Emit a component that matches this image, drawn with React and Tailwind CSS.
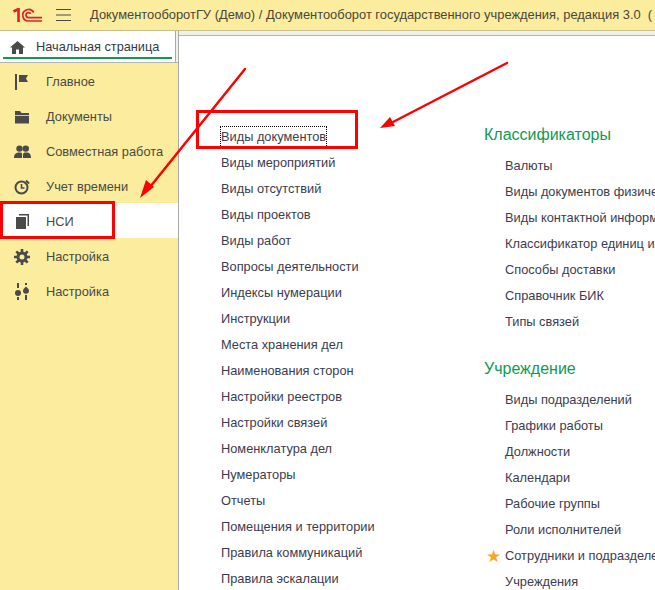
const font = { fontFamily: '"Liberation Sans", Arial, sans-serif' };

const leftLinks = [
  "Виды документов",
  "Виды мероприятий",
  "Виды отсутствий",
  "Виды проектов",
  "Виды работ",
  "Вопросы деятельности",
  "Индексы нумерации",
  "Инструкции",
  "Места хранения дел",
  "Наименования сторон",
  "Настройки реестров",
  "Настройки связей",
  "Номенклатура дел",
  "Нумераторы",
  "Отчеты",
  "Помещения и территории",
  "Правила коммуникаций",
  "Правила эскалации",
];

const classifiers = [
  "Валюты",
  "Виды документов физических лиц",
  "Виды контактной информации",
  "Классификатор единиц измерения",
  "Способы доставки",
  "Справочник БИК",
  "Типы связей",
];

const institution = [
  "Виды подразделений",
  "Графики работы",
  "Должности",
  "Календари",
  "Рабочие группы",
  "Роли исполнителей",
  "Сотрудники и подразделения",
  "Учреждения",
];

const FlagIcon = () => (
  <svg width="16" height="16" viewBox="0 0 16 16" fill="#4a4a4a">
    <rect x="1" y="0" width="2" height="16" />
    <path d="M5 1h9l-2 3.500 2 3.500H5z" />
  </svg>
);

const FolderIcon = () => (
  <svg width="16" height="14" viewBox="0 0 16 14" fill="#4a4a4a">
    <path d="M1 1h5l1.500 2H15v2H1z" />
    <rect x="1" y="5.800" width="14" height="7.700" />
  </svg>
);

const PeopleIcon = () => (
  <svg width="17" height="14" viewBox="0 0 17 14" fill="#4a4a4a">
    <circle cx="5.500" cy="3.600" r="3.200" />
    <circle cx="11.800" cy="3.600" r="3.200" />
    <path d="M0 13c0-4 2-5.500 5.500-5.500S8 9 8 13z" />
    <path d="M9 13c0-4-.5-5.500 3-5.500S17 9 17 13z" />
  </svg>
);

const TimerIcon = () => (
  <svg width="17" height="17" viewBox="0 0 17 17" fill="none" stroke="#4a4a4a" strokeWidth="2">
    <circle cx="7.500" cy="9.500" r="6" />
    <path d="M7.500 6v4h3" strokeWidth="1.600" />
    <path d="M12 2.500l3 3" />
  </svg>
);

const PagesIcon = () => (
  <svg width="15" height="15" viewBox="0 0 15 15" fill="#4a4a4a">
    <rect x="1" y="3" width="10" height="12" />
    <path d="M4 0h10v12h-1.500V1.500H4z" />
  </svg>
);

const GearIcon = () => (
  <svg width="16" height="16" viewBox="0 0 16 16" fill="none" stroke="#4a4a4a">
    <circle cx="8" cy="8" r="4" strokeWidth="3" />
    <path d="M8 0v3M8 13v3M0 8h3M13 8h3M2.300 2.300l2.200 2.200M11.500 11.500l2.200 2.200M13.700 2.300l-2.200 2.200M4.500 11.500l-2.200 2.200" strokeWidth="2.600" />
  </svg>
);

const SlidersIcon = () => (
  <svg width="14" height="17" viewBox="0 0 14 17" fill="#4a4a4a">
    <rect x="2" y="0" width="2" height="5" />
    <circle cx="3" cy="10" r="3" />
    <rect x="2" y="14" width="2" height="3" />
    <rect x="10" y="0" width="2" height="2" />
    <path d="M11 3.500c1.800 2 3 2.800 3 4.200a3 3 0 0 1-6 0c0-1.400 1.200-2.200 3-4.200z" />
    <rect x="10" y="12" width="2" height="5" />
  </svg>
);

const Logo = () => (
  <svg width="30" height="14" viewBox="0 0 30 14" fill="none" stroke="#d9232e">
    <path d="M0.500 3.500L5.500 1v13" strokeWidth="2.600" />
    <path d="M29 13H15.500a5.800 5.800 0 1 1 5.200-8.500" strokeWidth="1.700" />
    <path d="M29 9.600H15.500a2.500 2.500 0 1 1 2.200-3.700" strokeWidth="1.700" />
  </svg>
);

const HomeIcon = () => (
  <svg width="15" height="13" viewBox="0 0 15 13" fill="#4a4a4a">
    <path d="M7.500 0L15 6.500h-2V13H9V8.500H6V13H2V6.500H0z" />
  </svg>
);

const MenuIcon = () => (
  <svg width="15" height="12" viewBox="0 0 15 12" stroke="#4a4a4a" strokeWidth="1">
    <path d="M0 .5h15M0 6h15M0 11.500h15" />
  </svg>
);

const navItems = [
  { label: "Главное", icon: <FlagIcon /> },
  { label: "Документы", icon: <FolderIcon /> },
  { label: "Совместная работа", icon: <PeopleIcon /> },
  { label: "Учет времени", icon: <TimerIcon /> },
  { label: "НСИ", icon: <PagesIcon />, active: true },
  { label: "Настройка", icon: <GearIcon /> },
  { label: "Настройка", icon: <SlidersIcon /> },
];

const LinkRow = ({ text, focused, starred }) => (
  <div className="relative h-[26px] flex items-center whitespace-nowrap text-[12.8px] text-[#3c3c50]">
    {starred && <span className="absolute left-[-19px] top-[1px] text-[17px] text-[#f5a623]">★</span>}
    <span className={focused ? "inline-block outline-1 outline-dotted outline-black" : ""}>{text}</span>
  </div>
);

const Annotations = () => (
  <svg className="absolute left-0 top-0 pointer-events-none" width="655" height="590" fill="none">
    <rect x="197.500" y="111.500" width="159" height="36" stroke="#ff0000" strokeWidth="3" />
    <rect x="1.500" y="202.500" width="112" height="35" stroke="#ff0000" strokeWidth="3" />
    <path d="M245 69L150 187" stroke="#ff0000" strokeWidth="2.500" strokeLinecap="round" />
    <path d="M140 198l6-18 8 7z" fill="#ff0000" />
    <path d="M507 63L393 122" stroke="#ff0000" strokeWidth="2.500" strokeLinecap="round" />
    <path d="M380 128l10-11 5 9z" fill="#ff0000" />
  </svg>
);

export default function App() {
  return (
    <div className="relative w-[655px] h-[590px] overflow-hidden bg-[#fbec9e] flex flex-col" style={font}>
      <header className="h-[31px] shrink-0 flex items-center border-b border-[#c9bf8a]">
        <div className="ml-[13px]"><Logo /></div>
        <div className="ml-[13px]"><MenuIcon /></div>
        <span className="ml-[19px] whitespace-pre text-[12.9px] text-[#4b4638]">
          ДокументооборотГУ (Демо) / Документооборот государственного учреждения, редакция 3.0  (
        </span>
      </header>
      <div className="flex flex-1 min-h-0">
        <aside className="w-[179px] shrink-0 flex flex-col border-r border-[#a9a9a9]">
          <div className="h-[32px] shrink-0 bg-[#f0f0e8] border-b border-[#b5b5b5]">
            <div className="h-full w-[176px] bg-white border-r border-[#a9a9a9] pt-[6px] px-[3px]">
              <div className="h-[22px] flex items-center gap-[11px] pl-[7px] border-b-2 border-[#0f9a50] text-[12.75px] text-[#333a4a]">
                <HomeIcon />
                <span>Начальная страница</span>
              </div>
            </div>
          </div>
          {navItems.map((item, i) => (
            <div
              key={i}
              className={`h-[35px] pt-[2px] flex items-center text-[12.8px] text-[#4a4a44] ${item.active ? "bg-white" : ""}`}
            >
              <div className="w-[46px] flex justify-center pl-[2px] pr-[4px]">{item.icon}</div>
              <span>{item.label}</span>
            </div>
          ))}
        </aside>
        <div className="flex-1 min-w-0 bg-[#f0f0e8] pt-[4px] flex flex-col">
          <main className="flex-1 min-h-0 overflow-hidden bg-white border-t border-[#b5b5b5] flex">
            <div className="w-[305px] shrink-0 pl-[42px] pt-[88px]">
              {leftLinks.map((t, i) => <LinkRow key={t} text={t} focused={i === 0} />)}
            </div>
            <div className="flex-1 min-w-0 pt-[85px] pl-[21px]">
              <h2 className="-ml-[21px] h-[26px] mb-[6px] pt-[2px] text-[16px] text-[#0f9a50] whitespace-nowrap">Классификаторы</h2>
              {classifiers.map(t => <LinkRow key={t} text={t} />)}
              <h2 className="-ml-[21px] h-[26px] mt-[20px] mb-[6px] pt-[2px] text-[16px] text-[#0f9a50] whitespace-nowrap">Учреждение</h2>
              {institution.map(t => <LinkRow key={t} text={t} starred={t.startsWith("Сотрудники")} />)}
            </div>
          </main>
        </div>
      </div>
      <Annotations />
    </div>
  );
}
